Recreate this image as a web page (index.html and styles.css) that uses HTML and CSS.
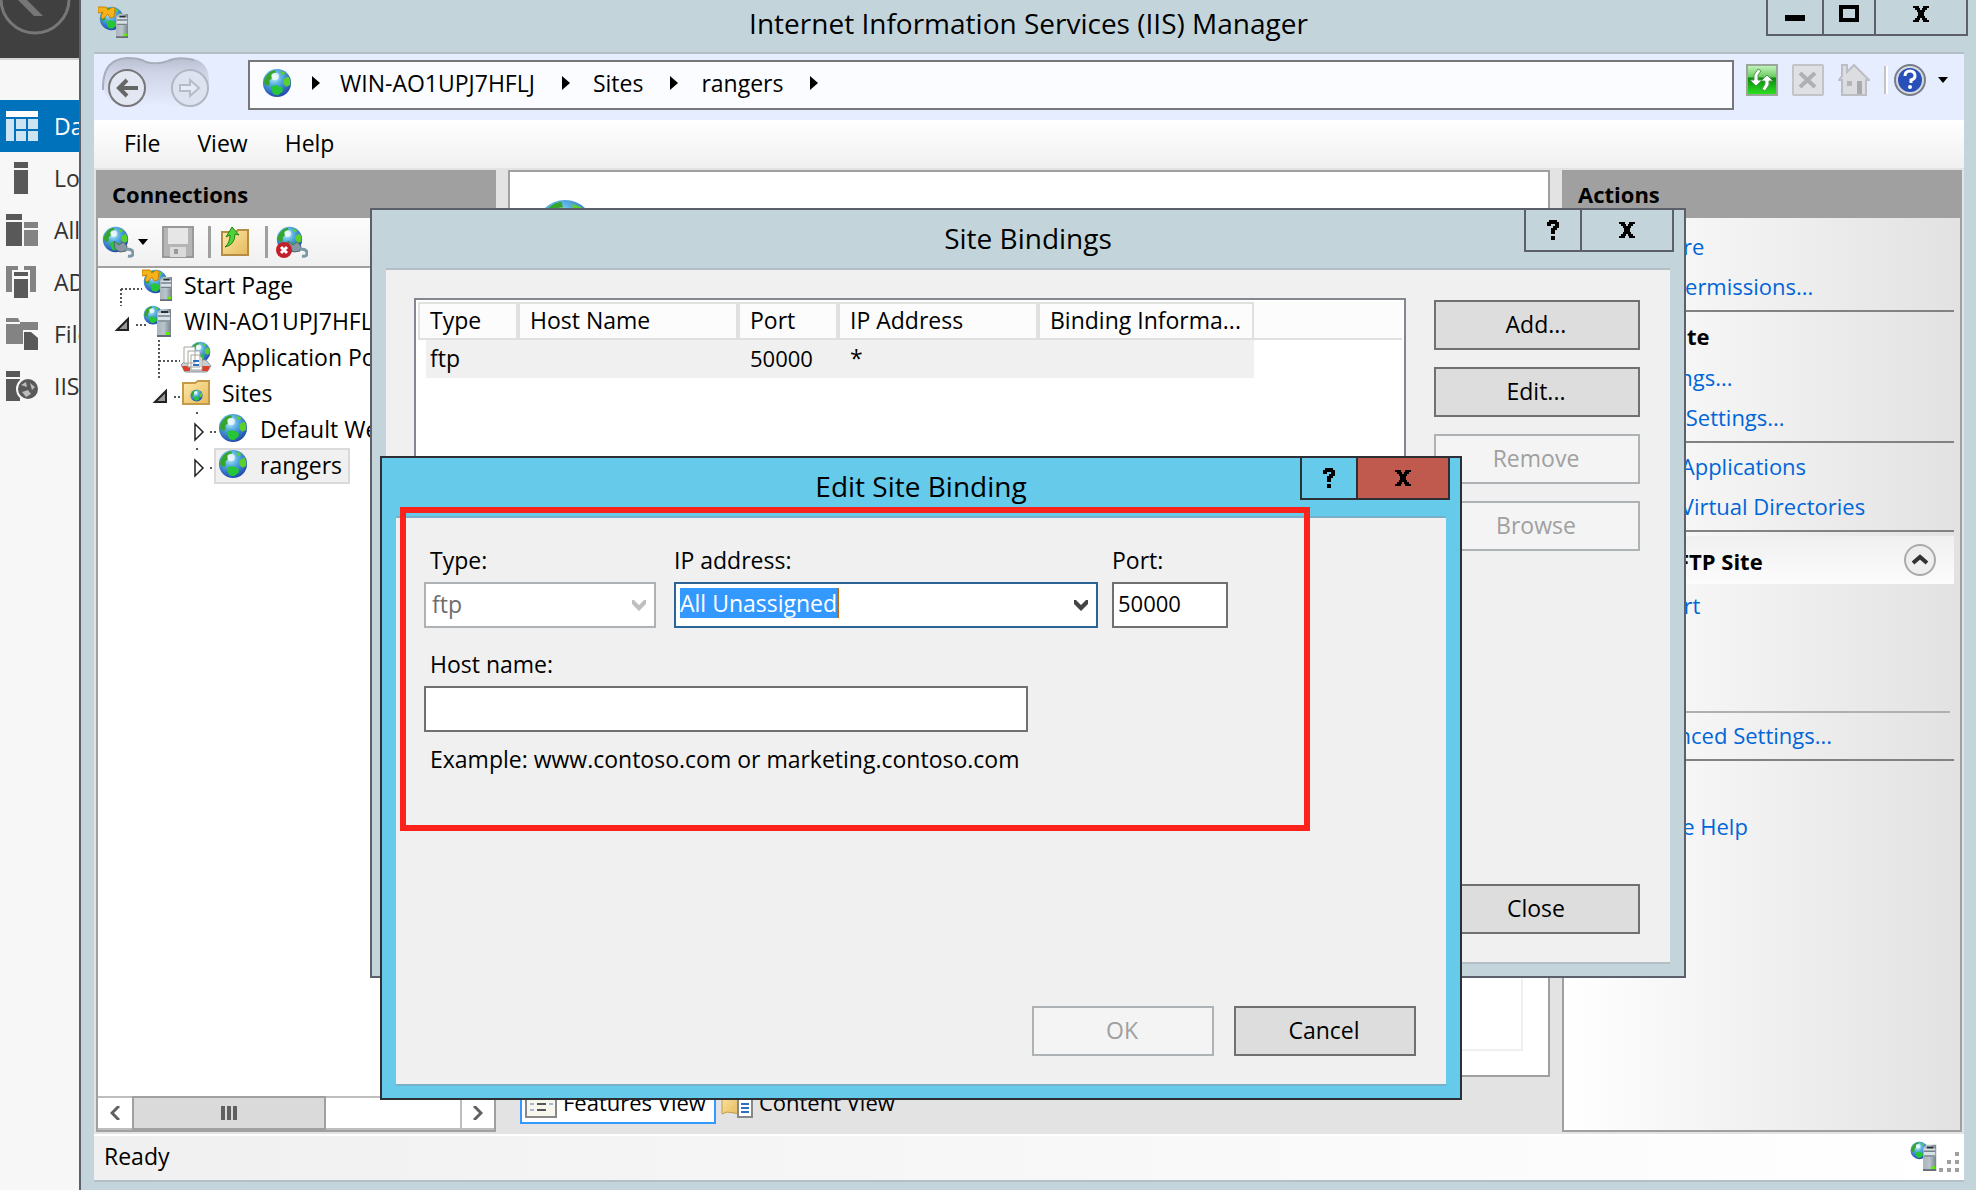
FILE: index.html
```html
<!DOCTYPE html>
<html lang="en">
<head>
<meta charset="utf-8">
<title>Internet Information Services (IIS) Manager</title>
<link rel="stylesheet" href="styles.css">
</head>
<body>
<svg class="sprite" width="0" height="0" aria-hidden="true">
  <defs>
    <radialGradient id="sea" cx="0.4" cy="0.3" r="0.75"><stop offset="0" stop-color="#c8f2fc"/><stop offset="0.35" stop-color="#58b0e0"/><stop offset="0.75" stop-color="#2f6cc4"/><stop offset="1" stop-color="#1f3fa0"/></radialGradient>
    <linearGradient id="steel" x1="0" x2="1" y1="0" y2="0"><stop offset="0" stop-color="#a9b4bc"/><stop offset="0.5" stop-color="#b9c4cb"/><stop offset="1" stop-color="#76828b"/></linearGradient>
    <linearGradient id="manila" x1="0" x2="1" y1="0" y2="1"><stop offset="0" stop-color="#fdeaa8"/><stop offset="1" stop-color="#e6b95c"/></linearGradient>
    <linearGradient id="greenbtn" x1="0" x2="0" y1="0" y2="1"><stop offset="0" stop-color="#c9f5c2"/><stop offset="0.38" stop-color="#6fce66"/><stop offset="0.45" stop-color="#0b8a10"/><stop offset="1" stop-color="#2ee520"/></linearGradient>
    <linearGradient id="pill" x1="0" x2="0" y1="0" y2="1"><stop offset="0" stop-color="#b9bfd0"/><stop offset="0.3" stop-color="#cfd5e6"/><stop offset="1" stop-color="#e6edff"/></linearGradient>
    <symbol id="globe" viewBox="0 0 32 32">
      <circle cx="16" cy="16" r="15" fill="url(#sea)"/>
      <path d="M3 11Q7 3 14 2L15 5 10 7 11 11 8 13 8 18 4 19Q1 15 3 11Z" fill="#35a52c"/>
      <path d="M20 3L25 5 23 8 20 6ZM23 12L28 9Q31 14 30 18L26 20 23 17Z" fill="#5bd02a"/>
      <path d="M9 20L15 18 22 21 22 25 17 29 12 28Z" fill="#25c637"/>
      <circle cx="14" cy="9" r="4" fill="#fff" opacity="0.7"/>
    </symbol>
    <symbol id="tower" viewBox="0 0 16 28">
      <path d="M1 3L5 0H15V28H1Z" fill="url(#steel)"/><path d="M2 4H14V13H2Z" fill="#d8e1e6"/>
      <path d="M5 2H12V4H5Z" fill="#263038"/><path d="M2 7H14M2 12H14" stroke="#75818a" stroke-width="1.5"/><path d="M10 23H14V26H10Z" fill="#5cf000"/>
      <path d="M1 27H15" stroke="#646e75" stroke-width="2"/>
    </symbol>
    <symbol id="server" viewBox="0 0 32 32"><use href="#globe" x="1" y="0" width="20" height="20"/><use href="#tower" x="14" y="4" width="16" height="28"/></symbol>
    <symbol id="iis" viewBox="0 0 32 32"><use href="#globe" x="1" y="0" width="25" height="25"/><path d="M0 1L8 1 10 4 15 1 17 3 16 11 12 12 10 8 5 13 3 11 5 6 0 7Z" fill="#f5b21b" stroke="#c98407"/><use href="#tower" x="17" y="8" width="14" height="24"/></symbol>
    <symbol id="plug" viewBox="0 0 32 32"><use href="#globe" x="0" y="0" width="27" height="27"/><path d="M12 15L17 19 21 16 25 20 24 25 18 26 13 23Z" fill="#8798a3" stroke="#536571"/><path d="M24 23Q31 23 31 27T26 30" fill="none" stroke="#7c97a6" stroke-width="3"/></symbol>
    <symbol id="help" viewBox="0 0 32 32"><circle cx="16" cy="16" r="15" fill="#d7d9dc" stroke="#777d88" stroke-width="2"/><circle cx="16" cy="16" r="12" fill="#2750b8"/><path d="M11 12Q11 7 16 7T21 12Q21 15 17 16V19" fill="none" stroke="#fff" stroke-width="3"/><circle cx="16" cy="23" r="2" fill="#fff"/></symbol>
    <symbol id="cross" viewBox="0 0 18 16"><path d="M1 0H7V2H8V4H10V2H11V0H17V2H15V4H13V6H12V10H13V12H15V14H17V16H11V14H10V12H8V14H7V16H1V14H3V12H5V10H6V6H5V4H3V2H1Z"/></symbol>
    <symbol id="query" viewBox="0 0 12 20"><path d="M2 0H10V2H12V8H10V10H8V14H4V8H6V6H8V4H4V6H0V2H2ZM4 16H8V20H4Z"/></symbol>
    <symbol id="chevron" viewBox="0 0 14 12"><path d="M0 0H2L7 5 12 0H14V4L7 11 0 4Z"/></symbol>
    <symbol id="right" viewBox="0 0 8 14"><path d="M0 0L8 7 0 14Z"/></symbol>
    <symbol id="down" viewBox="0 0 10 6"><path d="M0 0H10L5 6Z"/></symbol>
    <symbol id="open" viewBox="0 0 22 36"><path d="M1 26L12 15V26Z" fill="#999" stroke="#222" stroke-width="2"/><path d="M20 21H30" stroke="#555" stroke-width="2" stroke-dasharray="2 2"/></symbol>
    <symbol id="closed" viewBox="0 0 22 36"><path d="M3 12L11 20 3 28Z" fill="#fff" stroke="#222" stroke-width="1.5"/><path d="M5 0V2M18 20H26" stroke="#555" stroke-width="2" stroke-dasharray="2 2"/></symbol>
  </defs>
</svg>

<div class="desktop">
  <aside class="server-manager">
    <div class="sm-header"><svg width="79" height="58" viewBox="0 0 79 58"><circle cx="35" cy="-1" r="34" fill="none" stroke="#777" stroke-width="3"/><path d="M14 -4L34 16H43L26 -1V-8Z" fill="#777"/></svg></div>
    <nav class="sm-nav">
      <a href="#" class="sm-item sm-selected"><svg class="icon" viewBox="0 0 32 32"><path d="M0 1H32V7H0Z" fill="#fff"/><path d="M0 9H8V31H0ZM10 9H20V19H10ZM22 9H32V19H22ZM10 21H20V31H10ZM22 21H32V31H22Z" fill="#cce3f2"/></svg>Dashboard</a>
      <a href="#" class="sm-item"><svg class="icon" viewBox="0 0 32 32"><path d="M8 0H22V6H8ZM8 8H22V32H8Z" fill="#595959"/></svg>Local Server</a>
      <a href="#" class="sm-item"><svg class="icon" viewBox="0 0 32 32"><path d="M0 0H16V6H0ZM0 8H16V32H0Z" fill="#595959"/><path d="M18 8H32V14H18ZM18 16H32V32H18Z" fill="#838383"/></svg>All Servers</a>
      <a href="#" class="sm-item"><svg class="icon" viewBox="0 0 32 32"><path d="M0 0H12V4H6V26H0ZM18 0H30V26H24V4H18Z" fill="#838383"/><path d="M8 6H22V10H8ZM8 13H22V32H8Z" fill="#595959"/></svg>AD DS</a>
      <a href="#" class="sm-item"><svg class="icon" viewBox="0 0 32 32"><path d="M0 0H12L14 4H32V12H17V26H0Z" fill="#838383"/><path d="M0 5H14" stroke="#f7f7f7" stroke-width="2"/><path d="M18 14H25L32 20V32H18Z" fill="#595959"/></svg>File and Storage Services</a>
      <a href="#" class="sm-item"><svg class="icon" viewBox="0 0 32 32"><path d="M0 1H14V7H0ZM0 9H14V31H0Z" fill="#595959"/><circle cx="22" cy="19" r="11" fill="#595959" stroke="#f7f7f7" stroke-width="2"/><path d="M15 15L20 12 21 17ZM24 13L29 17 26 20ZM16 22L22 20 25 24 20 27Z" fill="#bbb"/></svg>IIS</a>
    </nav>
  </aside>

  <main class="window">
    <header class="titlebar main-titlebar">
      <svg class="icon app-icon"><use href="#iis"/></svg>
      <h1 class="title">Internet Information Services (IIS) Manager</h1>
      <div class="controls">
        <button class="ctl ctl-min" aria-label="Minimize"><svg width="20" height="18"><path d="M0 10H20V16H0Z"/></svg></button>
        <button class="ctl ctl-max" aria-label="Maximize"><svg width="20" height="18"><path d="M2 2H18V15H2Z" fill="none" stroke="#000" stroke-width="4"/></svg></button>
        <button class="ctl ctl-close" aria-label="Close window"><svg width="18" height="16"><use href="#cross"/></svg></button>
      </div>
    </header>

    <div class="client">
      <div class="navbar">
        <svg class="back-forward" width="110" height="54" viewBox="0 0 110 54"><path d="M1 27Q2 2 25 2Q38 2 44 6Q55 9 66 5Q72 2 83 2Q108 2 107 27Q107 50 83 52Q70 52 60 48Q50 46 42 49Q30 54 20 50Q2 46 1 27Z" fill="url(#pill)"/><path d="M1 34Q0 3 25 2Q38 2 44 6Q55 9 66 5Q76 0 92 4" fill="none" stroke="#a8aebb" stroke-width="2"/><circle cx="25" cy="32" r="18" fill="#e3e7f1" stroke="#77777a" stroke-width="2"/><path d="M36 32H18M25 24L17 32 25 40" fill="none" stroke="#666" stroke-width="4"/><circle cx="88" cy="32" r="18" fill="#dde3f0" stroke="#b3b7c2" stroke-width="2"/><path d="M78 29H88V24L97 32 88 40V35H78Z" fill="#e6ebf6" stroke="#b8bcc8" stroke-width="2"/></svg>
        <div class="address">
          <svg class="addr-globe" width="30" height="30"><use href="#globe"/></svg>
          <svg class="arrow" width="8" height="14"><use href="#right"/></svg><span>WIN-AO1UPJ7HFLJ</span>
          <svg class="arrow" width="8" height="14"><use href="#right"/></svg><span>Sites</span>
          <svg class="arrow" width="8" height="14"><use href="#right"/></svg><span>rangers</span>
          <svg class="arrow" width="8" height="14"><use href="#right"/></svg>
        </div>
        <div class="nav-tools">
          <button class="tool" aria-label="Refresh"><svg class="icon" viewBox="0 0 32 32"><rect x="1" y="1" width="30" height="30" fill="url(#greenbtn)" stroke="#9aa89a" stroke-width="2"/><path d="M12 5L8 11V16H4L10 22 16 16H12V11L15 7ZM21 11L27 17H23V21L19 27 16 25 19 20V17H15Z" fill="#fff" stroke="#4c9c4c"/></svg></button>
          <button class="tool" aria-label="Stop"><svg class="icon" viewBox="0 0 32 32"><rect x="1" y="1" width="30" height="30" rx="1" fill="#dfe0e4" stroke="#c2c4c9" stroke-width="2"/><path d="M8 9L23 23M23 9L8 23" stroke="#aeb0b5" stroke-width="4"/></svg></button>
          <button class="tool" aria-label="Home"><svg class="icon" viewBox="0 0 32 32"><path d="M4 1H9V8L16 1 31 16H28V31H4V16H1L4 12Z" fill="#dcdde0" stroke="#bcbec3" stroke-width="2"/><path d="M9 17H14V22H9Z" fill="#b3b5b9"/><path d="M19 17H24V30H19Z" fill="#a8a9ad"/></svg></button>
          <span class="nav-sep"></span>
          <button class="tool tool-help" aria-label="Help"><svg class="icon"><use href="#help"/></svg></button>
          <svg width="10" height="6"><use href="#down"/></svg>
        </div>
      </div>

      <nav class="menubar"><a href="#">File</a><a href="#">View</a><a href="#">Help</a></nav>

      <div class="workspace">
        <section class="pane">
          <h2 class="pane-title">Connections</h2>
          <div class="toolbar">
            <button class="tool" aria-label="Connect"><svg class="icon"><use href="#plug"/></svg></button>
            <svg class="tool-caret" width="10" height="6"><use href="#down"/></svg>
            <button class="tool" aria-label="Save"><svg class="icon" viewBox="0 0 32 32"><path d="M1 1H31V31H1Z" fill="#b5b5b5" stroke="#999" stroke-width="2"/><path d="M6 2H26V18H6Z" fill="#e6e6e6"/><path d="M8 21H24V31H8Z" fill="#dadada"/><path d="M12 23H16V28H12Z" fill="#999"/></svg></button>
            <span class="tool-sep"></span>
            <button class="tool" aria-label="Up"><svg class="icon" viewBox="0 0 32 32"><path d="M3 6H17L19 4H29V29H3Z" fill="url(#manila)" stroke="#b28d42" stroke-width="2"/><path d="M6 21Q11 17 11 9L7 11 13 1 20 9 16 8Q16 19 6 21Z" fill="#4fd235" stroke="#23861c"/></svg></button>
            <span class="tool-sep"></span>
            <button class="tool" aria-label="Delete connection"><svg class="icon" viewBox="0 0 32 32"><use href="#plug" width="32" height="32"/><circle cx="8" cy="24" r="8" fill="#c4202c"/><path d="M5 21L11 27M11 21L5 27" stroke="#fff" stroke-width="3"/></svg></button>
          </div>
          <div class="tree">
            <div class="row"><svg class="exp" viewBox="0 0 22 36"><path d="M5 21V38M5 21H26" stroke="#555" stroke-width="2" stroke-dasharray="2 2" fill="none"/></svg><span class="node"><svg class="icon"><use href="#iis"/></svg>Start Page</span></div>
            <div class="row"><svg class="exp"><use href="#open"/></svg><span class="node"><svg class="icon"><use href="#server"/></svg>WIN-AO1UPJ7HFLJ</span></div>
            <div class="row level1"><svg class="exp" viewBox="0 0 22 36"><path d="M5 0V38M5 21H26" stroke="#555" stroke-width="2" stroke-dasharray="2 2" fill="none"/></svg><span class="node"><svg class="icon" viewBox="0 0 32 32"><use href="#globe" x="9" y="0" width="22" height="22"/><path d="M1 24L6 19H26L31 25 27 31H5Z" fill="#c9ced2" stroke="#8d969c"/><path d="M2 25H10V30H4ZM22 25H30L28 30H22Z" fill="#d8402c"/><path d="M4 6H15V22H4ZM8 10H20V26H8ZM11 14H19L22 17V29H11Z" fill="#fff" stroke="#a8a49c"/><path d="M13 20H19M13 24H19" stroke="#2d6fc0" stroke-width="2"/></svg>Application Pools</span></div>
            <div class="row level1"><svg class="exp"><use href="#open"/></svg><span class="node"><svg class="icon" viewBox="0 0 32 32"><path d="M3 6H15L18 4H29V27H3Z" fill="url(#manila)" stroke="#c49a48" stroke-width="2"/><use href="#globe" x="10" y="12" width="13" height="13"/></svg>Sites</span></div>
            <div class="row level2"><svg class="exp"><use href="#closed"/></svg><span class="node"><svg class="icon" viewBox="0 0 32 32"><use href="#globe" width="30" height="30"/></svg>Default Web Site</span></div>
            <div class="row level2"><svg class="exp"><use href="#closed"/></svg><span class="node node-selected"><svg class="icon" viewBox="0 0 32 32"><use href="#globe" width="30" height="30"/></svg>rangers</span></div>
          </div>
          <div class="hscroll">
            <button class="hs-btn" aria-label="Scroll left"><svg width="10" height="14"><path d="M9 0L2 7 9 14" fill="none" stroke="#606060" stroke-width="3"/></svg></button>
            <div class="hs-thumb"><svg width="16" height="14"><path d="M0 0H4V14H0ZM6 0H10V14H6ZM12 0H16V14H12Z" fill="#606060"/></svg></div>
            <div class="hs-track"></div>
            <button class="hs-btn hs-right" aria-label="Scroll right"><svg width="10" height="14"><path d="M1 0L8 7 1 14" fill="none" stroke="#606060" stroke-width="3"/></svg></button>
          </div>
        </section>

        <section class="center">
          <div class="feature-pane"><svg class="feature-globe" width="60" height="60"><use href="#globe"/></svg><div class="feature-list"></div></div>
          <div class="view-tabs">
            <button class="tab tab-active"><svg class="icon" viewBox="0 0 32 32"><path d="M1 1H31V31H1Z" fill="#f7f7ee" stroke="#888" stroke-width="2"/><path d="M5 6H9M5 12H9M5 18H9M5 24H9M24 6H28M24 12H28M24 18H28" stroke="#a3b8d6" stroke-width="2"/><path d="M12 12H21M12 18H21M12 24H21" stroke="#555" stroke-width="2"/></svg>Features View</button>
            <button class="tab"><svg class="icon" viewBox="0 0 32 32"><path d="M1 3H20V28L6 26 1 28Z" fill="url(#manila)" stroke="#c49a48"/><path d="M17 8H26L31 13V31H17Z" fill="#fff" stroke="#888" stroke-width="2"/><path d="M20 18H28M20 22H28M20 26H28" stroke="#2d6fc0" stroke-width="2"/></svg>Content View</button>
          </div>
        </section>

        <section class="pane">
          <h2 class="pane-title">Actions</h2>
          <div class="actions">
            <div class="group"><a href="#">Explore</a><a href="#">Edit Permissions...</a></div>
            <div class="group site"><h3>Edit Site</h3><a href="#">Bindings...</a><a href="#">Basic Settings...</a></div>
            <div class="group views"><a href="#">View Applications</a><a href="#">View Virtual Directories</a></div>
            <div class="group ftp">
              <div class="group-head"><h3>Manage FTP Site</h3><button class="collapse" aria-label="Collapse"><svg class="icon" viewBox="0 0 32 32"><circle cx="16" cy="16" r="15" fill="#eee" stroke="#aaa" stroke-width="2"/><path d="M9 19L16 13 23 19" fill="none" stroke="#333" stroke-width="4"/></svg></button></div>
              <a href="#">Restart</a><a href="#">Start</a><a href="#">Stop</a>
              <div class="divider"></div>
              <a href="#">Advanced Settings...</a>
            </div>
            <div class="group help-group"><a href="#">Help</a><a href="#">Online Help</a></div>
          </div>
        </section>
      </div>

      <footer class="status"><span>Ready</span><svg width="50" height="36" viewBox="0 0 50 36"><use href="#server" x="0" y="2" width="30" height="32"/><path d="M46 14H50V18H46ZM38 22H42V26H38ZM46 22H50V26H46ZM30 30H34V34H30ZM38 30H42V34H38ZM46 30H50V34H46Z" fill="#a0a0a0"/></svg></footer>
    </div>
  </main>

  <section class="dialog bindings" role="dialog" aria-label="Site Bindings">
    <header class="titlebar">
      <h2 class="title">Site Bindings</h2>
      <div class="controls">
        <button class="ctl ctl-help" aria-label="Help"><svg width="12" height="20"><use href="#query"/></svg></button>
        <button class="ctl ctl-close" aria-label="Close dialog"><svg width="18" height="16"><use href="#cross"/></svg></button>
      </div>
    </header>
    <div class="dialog-body bindings-body">
      <div class="list">
        <table>
          <colgroup><col class="c-type"><col class="c-host"><col class="c-port"><col class="c-ip"><col class="c-info"><col></colgroup>
          <thead><tr><th>Type</th><th>Host Name</th><th>Port</th><th>IP Address</th><th>Binding Informa...</th><th class="fill"></th></tr></thead>
          <tbody><tr><td>ftp</td><td></td><td class="num">50000</td><td>*</td><td></td><td class="fill"></td></tr></tbody>
        </table>
      </div>
      <div class="side-buttons">
        <button class="btn">Add...</button>
        <button class="btn">Edit...</button>
        <button class="btn" disabled>Remove</button>
        <button class="btn" disabled>Browse</button>
        <button class="btn btn-bottom">Close</button>
      </div>
    </div>
  </section>

  <section class="dialog edit" role="dialog" aria-label="Edit Site Binding">
    <header class="titlebar">
      <h2 class="title">Edit Site Binding</h2>
      <div class="controls">
        <button class="ctl ctl-help" aria-label="Help"><svg width="12" height="20"><use href="#query"/></svg></button>
        <button class="ctl ctl-close ctl-red" aria-label="Close dialog"><svg width="18" height="16"><use href="#cross"/></svg></button>
      </div>
    </header>
    <form class="dialog-body edit-body">
      <div class="fields">
        <div class="field f-type"><label for="type">Type:</label><div class="combo"><select id="type" disabled><option>ftp</option></select><svg width="14" height="12"><use href="#chevron"/></svg></div></div>
        <div class="field f-ip"><label for="ip">IP address:</label><div class="combo combo-focus"><select id="ip"><option>All Unassigned</option></select><svg width="14" height="12"><use href="#chevron"/></svg></div></div>
        <div class="field f-port"><label for="port">Port:</label><input id="port" class="num" type="text" value="50000"></div>
      </div>
      <div class="field f-host"><label for="host">Host name:</label><input id="host" type="text"></div>
      <p class="example">Example: www.contoso.com or marketing.contoso.com</p>
      <div class="edit-buttons"><button type="button" class="btn" disabled>OK</button><button type="button" class="btn">Cancel</button></div>
    </form>
    <div class="highlight"></div>
  </section>
</div>
</body>
</html>
```

FILE: styles.css
```css
* { box-sizing: border-box; }
body { margin: 0; font-family: "Open Sans", "Noto Sans", sans-serif; font-size: 23px; line-height: 30px; color: #000; }
h1, h2, h3, p { margin: 0; font-weight: 400; }
a { color: inherit; text-decoration: none; }
button, input, select { font: inherit; color: inherit; margin: 0; }
svg { display: block; flex: none; }
.sprite { position: absolute; }
.icon { width: 32px; height: 32px; }

.desktop { position: relative; display: flex; min-height: 100vh; overflow: hidden; }

/* Server Manager, visible behind the IIS window */
.server-manager { width: 79px; flex: none; overflow: hidden; background: #f7f7f7; }
.sm-header { height: 60px; background: #404040; border-bottom: 2px solid #d4d4d4; }
.sm-nav { margin-top: 40px; }
.sm-item { display: flex; align-items: center; gap: 16px; height: 52px; padding-left: 6px; white-space: nowrap; color: #333; }
.sm-selected { background: #0072bc; color: #fff; }

/* Window frames */
.window { flex: 1; min-width: 0; display: flex; flex-direction: column; padding: 0 12px 8px 13px; background: #c3d5db; border-left: 2px solid #5c606a; }
.titlebar { display: grid; grid-template-columns: 1fr auto 1fr; height: 58px; padding: 0 10px; }
.title { grid-column: 2; align-self: center; padding-bottom: 2px; font-size: 28px; line-height: 36px; white-space: nowrap; }
.controls { grid-column: 3; justify-self: end; display: flex; align-self: start; border: 2px solid #5c606a; border-top: 0; }
.ctl { display: flex; align-items: center; justify-content: center; height: 40px; padding: 0; border: 0; background: none; }
.ctl + .ctl { border-left: 2px solid #5c606a; }
.ctl-help { width: 54px; }
.ctl-close { width: 92px; }
.main-titlebar { height: 52px; margin: 0 -12px 0 -13px; padding: 0 8px; }
.main-titlebar .title { grid-row: 1; padding-bottom: 6px; }
.main-titlebar .ctl { height: 34px; padding-bottom: 6px; }
.app-icon { grid-column: 1; grid-row: 1; margin: 6px 0 0 9px; }
.ctl-min { width: 54px; }
.ctl-max { width: 52px; }
.client { flex: 1; display: flex; flex-direction: column; border-top: 2px solid #b3bec6; border-bottom: 2px solid #b3c0c8; }

/* Address bar */
.navbar { display: flex; height: 66px; background: #e6edff; }
.back-forward { margin: 2px 36px 0 8px; }
.address { flex: 1; display: flex; align-items: center; height: 50px; margin-top: 6px; padding: 0 12px 4px; border: 2px solid #77777a; background: #fafcff; }
.address .arrow { margin: 0 23px 0 27px; }
.address .addr-globe + .arrow { margin: 0 20px; }
.nav-tools { display: flex; align-items: center; height: 32px; margin-top: 10px; padding: 0 16px 0 12px; gap: 12px; }
.tool { display: block; padding: 0; border: 0; background: none; }
.nav-tools .tool + .tool { margin-left: 2px; }
.nav-sep { width: 4px; height: 28px; margin-left: 2px; border-left: 2px solid #c4c4c8; border-right: 2px solid #fff; }
.tool-help { margin-left: -6px; }
.menubar { display: flex; gap: 37px; height: 48px; padding: 8px 30px; background: linear-gradient(#fff, #f0f0f0); }

/* Workspace */
.workspace { flex: 1; display: grid; grid-template-columns: 400px 1fr 400px; column-gap: 12px; padding: 2px; background: #e3e3e3; }
.pane { display: flex; flex-direction: column; min-width: 0; border: 2px solid #a0a0a0; border-top: 0; background: #fff; }
.pane-title { height: 48px; padding: 9px 14px; background: #a0a0a0; font-size: 22px; font-weight: 700; }
.toolbar { display: flex; align-items: center; height: 50px; padding: 0 4px; background: linear-gradient(#fcfcfc, #f0f0f0); border-bottom: 2px solid #a0a0a0; }
.tool-caret { margin: 0 14px 0 4px; }
.tool-sep { width: 3px; height: 32px; margin: 0 8px 0 14px; background: #a0a0a0; }
.tree { flex: 1; overflow: hidden; }
.row { display: flex; align-items: center; height: 36px; padding-left: 18px; }
.level1 { padding-left: 56px; }
.level2 { padding-left: 94px; }
.exp { width: 22px; height: 36px; overflow: visible; }
symbol { overflow: visible; }
.node { display: flex; align-items: center; gap: 10px; height: 36px; padding: 0 6px 2px 2px; border: 2px solid transparent; white-space: nowrap; }
.node-selected { background: #f0f0f0; border-color: #dadada; }
.hscroll { display: flex; height: 34px; border: 2px solid #bdbdbd; border-left: 0; border-right: 0; }
.hs-btn { display: flex; align-items: center; justify-content: center; width: 34px; padding: 0; border: 0; background: #fff; }
.hs-right { border-left: 2px solid #bdbdbd; }
.hs-thumb { display: flex; align-items: center; justify-content: center; width: 194px; margin: -2px 0; border: 2px solid #a0a0a0; background: #dadada; }
.hs-track { flex: 1; }

.center { display: flex; flex-direction: column; padding-bottom: 8px; }
.feature-pane { flex: 1; display: flex; flex-direction: column; padding: 26px 25px 24px; border: 2px solid #a0a0a0; background: #fff; }
.feature-list { flex: 1; margin-top: 20px; border: 2px solid #f0f0f0; }
.view-tabs { display: flex; padding: 7px 0 0 12px; }
.tab { display: flex; align-items: center; gap: 6px; height: 40px; padding: 0 8px 4px 3px; border: 2px solid transparent; background: none; font-size: 22px; white-space: nowrap; }
.tab-active { background: #fff; border-color: #39f; }

.actions { flex: 1; padding: 10px 6px 0 8px; background: linear-gradient(90deg, #fff, #e2e2e2); font-size: 22px; }
.actions a { display: block; height: 40px; padding: 3px 0 7px 55px; color: #0066d8; white-space: nowrap; }
.actions h3 { height: 47px; padding: 8px 12px; font-size: 22px; font-weight: 700; line-height: 32px; }
.group { padding-bottom: 2px; border-bottom: 2px solid #828282; }
.site h3 { padding-left: 48px; }
.views { padding-top: 5px; }
.ftp { padding-top: 4px; }
.group-head { display: flex; align-items: center; justify-content: space-between; height: 48px; margin-bottom: 3px; padding-right: 18px; background: linear-gradient(#f0f0f0, #fcfcfc); }
.collapse { padding: 0; border: 0; background: none; }
.divider { height: 2px; margin: 4px 4px 4px 0; background: #b0b0b0; }
.help-group { padding-top: 7px; border: 0; }

.status { display: flex; align-items: center; justify-content: space-between; height: 46px; padding: 0 5px 4px 10px; border-top: 2px solid #fff; background: linear-gradient(90deg, #f0f0f0, #fff); }

/* Dialogs */
.dialog { position: absolute; display: flex; flex-direction: column; border: 2px solid #5c606a; background: #c3d5db; }
.bindings { left: 370px; top: 208px; width: 1316px; height: 770px; }
.edit { left: 380px; top: 456px; width: 1082px; height: 644px; background: #66caea; border-color: #2c2f33; }
.edit .controls, .edit .ctl { border-color: #2c2f33; }
.ctl-red { background: #c0594e; }
.dialog-body { flex: 1; margin: 0 14px 12px; border-top: 2px solid #b3bec6; border-bottom: 2px solid #b3bec6; background: #f0f0f0; }
.bindings-body { display: flex; gap: 28px; padding: 28px 30px 28px 28px; }
.list { flex: 1; padding: 2px; border: 2px solid #828790; background: #fff; }
table { width: 100%; table-layout: fixed; border-collapse: separate; border-spacing: 0; }
.c-type { width: 100px; }
.c-host { width: 220px; }
.c-port { width: 100px; }
.c-ip { width: 200px; }
.c-info { width: 216px; }
th, td { height: 38px; padding: 0 0 2px 12px; text-align: left; font-weight: 400; white-space: nowrap; }
th { padding: 0 0 2px 10px; background: #fcfcfc; border: 2px solid #e0e0e0; }
td { background: #f0f0f0; }
td:first-child { padding-left: 4px; border-left: 8px solid #fff; }
th.fill { border-width: 0 0 2px; }
td.fill { background: none; }
.num { font-size: 22px; }
.side-buttons { display: flex; flex-direction: column; gap: 17px; width: 206px; padding-top: 2px; }
.btn { height: 50px; padding: 0 2px 3px 0; border: 2px solid #707070; background: #ddd; text-align: center; }
.btn:disabled { color: #a0a0a0; border-color: #adb2b5; background: #f4f4f4; }
.btn-bottom { margin-top: auto; }

.edit-body { display: flex; flex-direction: column; padding: 27px 30px 28px 28px; border-color: #78b0cc; }
.fields { display: flex; }
.field { display: flex; flex-direction: column; }
.field label { height: 37px; padding-left: 6px; }
.f-type { width: 232px; }
.f-ip { width: 424px; margin: 0 14px 0 18px; }
.f-ip label, .f-port label { padding-left: 0; }
.f-port { width: 116px; }
.f-host { width: 604px; margin-top: 21px; }
.combo { position: relative; }
.combo svg { position: absolute; right: 10px; top: 18px; fill: #444; }
input, select { width: 100%; height: 46px; padding: 0 4px 5px; border: 2px solid #707070; border-radius: 0; background: #fff; outline: 0; appearance: none; }
select:disabled { color: #6d6d6d; opacity: 1; padding: 0 6px 2px; border-color: #adb2b5; }
select:disabled + svg { fill: #bfbfbf; }
/* the focused combo shows its value selected, with the caret at the end */
.combo-focus select { color: #fff; border-color: #2a6496; background: linear-gradient(#c8690c, #c8690c) 161px 4px / 2px 30px no-repeat, linear-gradient(#39f, #39f) 4px 4px / 157px 30px no-repeat, #fff; }
.example { padding: 12px 6px; }
.edit-buttons { display: flex; gap: 20px; justify-content: flex-end; margin-top: auto; }
.edit-buttons .btn { width: 182px; }
.highlight { position: absolute; left: 18px; top: 49px; width: 910px; height: 324px; border: 6px solid #fc221c; pointer-events: none; }
```
